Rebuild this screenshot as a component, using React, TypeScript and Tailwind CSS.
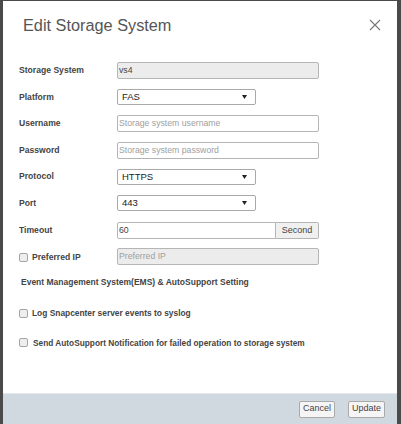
const arial = { fontFamily: '"Liberation Sans", Arial, sans-serif' };

function Caret() {
  return (
    <svg width="5" height="4" viewBox="0 0 5 4" className="absolute right-[8px] top-[5px]">
      <path d="M0 0h5L2.5 4z" fill="#222" />
    </svg>
  );
}

function Select({ value }: { value: string }) {
  return (
    <div className="relative w-[139px] h-[16px] border border-[#a9a9a9] rounded-[2px] bg-white text-[9.5px] leading-[14px] text-[#222] pl-[4px]">
      {value}
      <Caret />
    </div>
  );
}

function TextInput({ value, placeholder, disabled }: { value?: string; placeholder?: string; disabled?: boolean }) {
  return (
    <div
      className={`w-[202px] h-[17px] border border-[#b5b5b5] rounded-[2px] text-[8.7px] leading-[15px] pl-[1px] ${
        disabled ? 'bg-[#ececec]' : 'bg-white'
      } ${value ? 'text-[#444]' : 'text-[#a0a0a0]'}`}
    >
      {value || placeholder}
    </div>
  );
}

function Row({ label, children }: { label: React.ReactNode; children: React.ReactNode }) {
  return (
    <div className="flex items-center h-[17px]">
      <div className="w-[98px] text-[8.6px] font-bold text-[#444]">{label}</div>
      {children}
    </div>
  );
}

function Check() {
  return <span className="inline-block w-[9px] h-[9px] border border-[#a5a5a5] rounded-[2px] bg-[#eeeeee]" />;
}

export default function App() {
  return (
    <div className="w-[401px] h-[424px] bg-[#4a4a4a] pl-[3px] pr-[4px] pt-[1px]" style={arial}>
      <div className="h-full bg-white flex flex-col">
        <div className="flex items-center justify-between pl-[20px] pr-[16px] pt-[8px] h-[40px]">
          <h1 className="text-[16.3px] text-[#555] font-normal">Edit Storage System</h1>
          <svg width="12" height="12" viewBox="0 0 12 12">
            <path d="M1 1l10 10M11 1L1 11" stroke="#777" strokeWidth="1.1" />
          </svg>
        </div>

        <div className="pl-[16px] pt-[21px] flex flex-col gap-[9.6px]">
          <Row label="Storage System">
            <TextInput value="vs4" disabled />
          </Row>
          <Row label="Platform">
            <Select value="FAS" />
          </Row>
          <Row label="Username">
            <TextInput placeholder="Storage system username" />
          </Row>
          <Row label="Password">
            <TextInput placeholder="Storage system password" />
          </Row>
          <Row label="Protocol">
            <Select value="HTTPS" />
          </Row>
          <Row label="Port">
            <Select value="443" />
          </Row>
          <Row label="Timeout">
            <div className="flex w-[202px] h-[17px]">
              <div className="flex-1 border border-[#b5b5b5] rounded-l-[2px] text-[8.7px] leading-[15px] pl-[1px] text-[#444]">60</div>
              <div className="w-[43px] border border-l-0 border-[#b5b5b5] rounded-r-[2px] bg-[#f0f0f0] text-[9px] leading-[15px] text-center text-[#444]">
                Second
              </div>
            </div>
          </Row>
          <Row
            label={
              <span className="flex items-center gap-[4px] pt-[2px]">
                <Check />
                Preferred IP
              </span>
            }
          >
            <TextInput placeholder="Preferred IP" disabled />
          </Row>
        </div>

        <div className="pl-[18px] pt-[11px] text-[8.5px] font-bold text-[#444]">Event Management System(EMS) &amp; AutoSupport Setting</div>
        <div className="pl-[16px] pt-[18px] flex items-center gap-[4px] text-[8.4px] font-bold text-[#444]">
          <Check />
          Log Snapcenter server events to syslog
        </div>
        <div className="pl-[16px] pt-[17px] flex items-center gap-[5px] text-[8.3px] font-bold text-[#444]">
          <Check />
          Send AutoSupport Notification for failed operation to storage system
        </div>

        <div className="mt-auto h-[31px] bg-[#d1d9e0] border-t border-[#e4e8ec] flex items-center justify-end gap-[13px] pr-[12px]">
          <button className="h-[17px] px-[3px] border border-[#aaa] rounded-[2px] bg-[#f5f5f5] text-[9px] text-[#444]">Cancel</button>
          <button className="h-[17px] px-[3px] border border-[#aaa] rounded-[2px] bg-[#f5f5f5] text-[9px] text-[#444]">Update</button>
        </div>
      </div>
    </div>
  );
}
